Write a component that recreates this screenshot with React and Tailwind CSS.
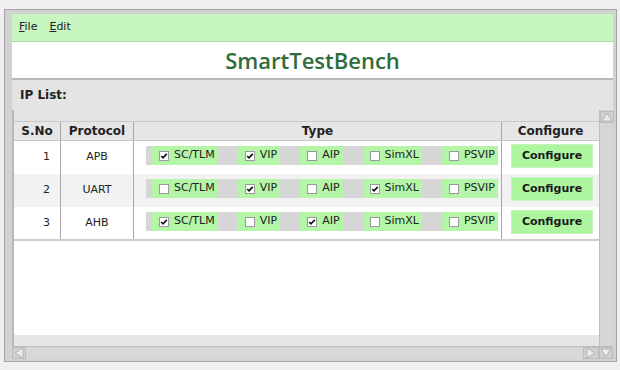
import { useState } from 'react';

const TYPES = ['SC/TLM', 'VIP', 'AIP', 'SimXL', 'PSVIP'];

const initialRows = [
  { id: 1, protocol: 'APB', checks: [true, true, false, false, false] },
  { id: 2, protocol: 'UART', checks: [false, true, false, true, false] },
  { id: 3, protocol: 'AHB', checks: [true, false, true, false, false] },
];

const CheckBox = ({ checked }) => (
  <span className="w-[10px] h-[10px] bg-white border border-[#9a9a9a] flex items-center justify-center shrink-0">
    {checked && (
      <svg width="8" height="8" viewBox="0 0 8 8">
        <path d="M1.2 4 L3 5.8 L6.8 1.8" stroke="#111" strokeWidth="1.7" fill="none" />
      </svg>
    )}
  </span>
);

const ArrowBtn = ({ dir, className = '' }) => {
  const pts = {
    up: '6,2 11,10 1,10',
    down: '1,2 11,2 6,10',
    left: '2,6 10,1 10,11',
    right: '2,1 10,6 2,11',
  }[dir];
  return (
    <div className={`w-[14px] h-[12px] bg-[#d0d0d0] border border-[#bdbdbd] flex items-center justify-center shrink-0 ${className}`}>
      <svg width="12" height="12" viewBox="0 0 12 12">
        <polygon points={pts} fill="#ececec" stroke="#b4b4b4" strokeWidth="1" />
      </svg>
    </div>
  );
};

export default function App() {
  const [rows, setRows] = useState(initialRows);

  const toggle = (rowId, idx) => {
    setRows(prev =>
      prev.map(r =>
        r.id === rowId ? { ...r, checks: r.checks.map((c, i) => (i === idx ? !c : c)) } : r
      )
    );
  };

  const dialog = { fontFamily: '"DejaVu Sans", sans-serif' };

  return (
    <div className="w-[620px] h-[370px] bg-[#f0f0f0] pt-[9px] pl-[4px] overflow-hidden" style={dialog}>
      <div className="w-[613px] h-[353px] border border-[#a4a4a4] bg-[#d2d2d2] pl-[7px] pr-[3px] pt-[4px] pb-[2px] flex flex-col">
        {/* Menu bar */}
        <div className="h-[28px] bg-[#c8f6c0] border-b border-[#b2d4aa] flex items-center gap-[12px] pl-[7px] text-[11px] text-[#222]">
          <span><span className="underline">F</span>ile</span>
          <span><span className="underline">E</span>dit</span>
        </div>

        {/* Title */}
        <div className="h-[38px] bg-white border-b-2 border-[#b8b8b8] flex items-center justify-center">
          <span
            className="text-[22px] font-semibold text-[#2f6d3b] leading-none"
            style={{ fontFamily: '"Open Sans", sans-serif' }}
          >
            SmartTestBench
          </span>
        </div>

        {/* Panel */}
        <div className="flex-1 bg-[#e4e4e4] flex flex-col">
          <div className="h-[30px] flex items-center pl-[8px] text-[12px] font-bold text-[#222]">IP List:</div>

          {/* Scroll pane */}
          <div className="flex-1 flex flex-col">
            <div className="flex-1 flex">
              <div className="w-[2px] bg-[#b8b8b8]" />
              {/* viewport */}
              <div className="flex-1 flex flex-col">
                <div className="h-[11px] bg-[#e4e4e4]" />
                {/* header */}
                <div className="h-[20px] flex border-t border-[#bcbcbc] border-b border-[#c8c8c8] bg-[#e6e6e6] text-[12px] font-bold text-[#222]">
                  <div className="w-[47px] flex items-center justify-center border-r border-[#a8a8a8]">S.No</div>
                  <div className="w-[73px] flex items-center justify-center border-r border-[#a8a8a8]">Protocol</div>
                  <div className="w-[368px] flex items-center justify-center border-r border-[#a8a8a8]">Type</div>
                  <div className="flex-1 flex items-center justify-center">Configure</div>
                </div>
                {/* rows */}
                <div className="flex-1 bg-white flex flex-col">
                  {rows.map((r, ri) => (
                    <div
                      key={r.id}
                      className={`flex text-[11px] text-[#222] ${ri === 2 ? 'h-[32px]' : 'h-[33px]'} ${ri === 1 ? 'bg-[#f2f2f2]' : 'bg-white'}`}
                    >
                      <div className="w-[47px] flex items-center justify-end pr-[10px] border-r border-[#a8a8a8]">{r.id}</div>
                      <div className="w-[73px] flex items-center justify-center border-r border-[#a8a8a8]">{r.protocol}</div>
                      <div className="w-[368px] pt-[5px] pl-[12px] border-r border-[#a8a8a8]">
                        <div className="w-[349px] h-[19px] bg-[#d6d6d6] flex gap-[20px] pl-[6px]">
                          {TYPES.map((t, i) => (
                            <button
                              key={t}
                              onClick={() => toggle(r.id, i)}
                              className="h-full bg-[#b4f5a8] flex items-center gap-[5px] pl-[7px] pr-[3px] text-[11px] text-[#222]"
                            >
                              <CheckBox checked={r.checks[i]} />
                              <span>{t}</span>
                            </button>
                          ))}
                        </div>
                      </div>
                      <div className="flex-1 pt-[3px] pl-[9px]">
                        <button className="w-[82px] h-[24px] bg-[#aef5a0] border border-[#c4f3bc] text-[11px] font-bold text-[#1a1a1a]">
                          Configure
                        </button>
                      </div>
                    </div>
                  ))}
                  <div className="h-[2px] bg-[#cdcdcd]" />
                  <div className="flex-1 bg-white" />
                  <div className="h-[11px] bg-[#e6e6e6]" />
                </div>
              </div>
              {/* vertical scrollbar */}
              <div className="w-[14px] bg-[#d6d6d6] border-l border-[#bdbdbd] flex flex-col">
                <ArrowBtn dir="up" className="mt-[1px]" />
                <div className="flex-1" />
              </div>
            </div>
            {/* horizontal scrollbar */}
            <div className="h-[13px] flex bg-[#d8d8d8] border-t border-[#bcbcbc]">
              <ArrowBtn dir="left" />
              <div className="flex-1" />
              <ArrowBtn dir="right" className="w-[16px]" />
              <ArrowBtn dir="down" />
            </div>
          </div>
        </div>
      </div>
    </div>
  );
}
